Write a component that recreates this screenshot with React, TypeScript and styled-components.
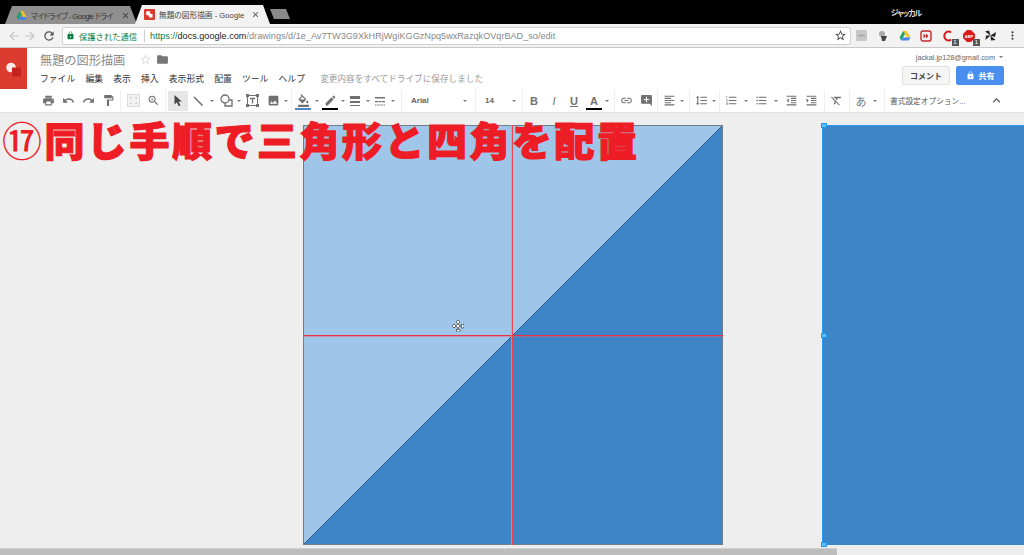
import React from 'react'
import styled, { createGlobalStyle } from 'styled-components'
import {
  MdArrowBack, MdArrowForward, MdRefresh, MdLock, MdStarBorder, MdFolder, MdMoreVert,
  MdPrint, MdUndo, MdRedo, MdFormatPaint, MdZoomIn, MdImage,
  MdFormatColorFill, MdEdit, MdLink, MdAddComment, MdFormatAlignLeft, MdFormatLineSpacing,
  MdFormatListNumbered, MdFormatListBulleted, MdFormatIndentDecrease, MdFormatIndentIncrease,
  MdFormatClear, MdExpandLess, MdClose,
} from 'react-icons/md'

const GlobalStyle = createGlobalStyle`
  html, body {
    margin: 0;
    width: 1024px;
    height: 555px;
    overflow: hidden;
    background: #eee;
    font-family: "Liberation Sans", "Noto Sans CJK JP", sans-serif;
  }
`

const Page = styled.div`
  width: 1024px;
  height: 555px;
  display: flex;
  flex-direction: column;
  overflow: hidden;
`

const TabStrip = styled.div`
  height: 24px;
  flex: none;
  background: #000;
  display: flex;
  align-items: flex-end;
  padding-left: 5px;
`
const Tab = styled.div<{ $active?: boolean }>`
  width: ${(p) => (p.$active ? 135 : 132)}px;
  margin-left: ${(p) => (p.$active ? -2 : 0)}px;
  height: ${(p) => (p.$active ? 19 : 18)}px;
  background: ${(p) => (p.$active ? '#f2f2f2' : '#8f8f8f')};
  clip-path: polygon(0 100%, 7px 0, calc(100% - 7px) 0, 100% 100%);
  display: flex;
  align-items: center;
  padding: 0 ${(p) => (p.$active ? 10 : 7)}px 0 ${(p) => (p.$active ? 9 : 11)}px;
  box-sizing: border-box;
  color: ${(p) => (p.$active ? '#444' : '#333')};
  font-size: 7.7px;
  font-feature-settings: "palt";
  white-space: nowrap;
  position: relative;
  z-index: ${(p) => (p.$active ? 2 : 1)};
  svg {
    flex: none;
  }
`
const TabTitle = styled.span<{ $tight?: boolean }>`
  flex: 1;
  margin-left: 4px;
  letter-spacing: ${(p) => (p.$tight ? -0.6 : 0)}px;
`
const NewTab = styled.div`
  width: 20px;
  height: 10px;
  margin: 0 0 5px 0;
  background: #8a8a8a;
  clip-path: polygon(0 0, 80% 0, 100% 100%, 20% 100%);
`
const WindowTitle = styled.div`
  margin-left: auto;
  margin-right: 103px;
  align-self: center;
  color: #ddd;
  font-size: 8px;
  font-weight: bold;
  font-feature-settings: "palt";
  letter-spacing: -1.2px;
`

const AddressBar = styled.div`
  height: 24px;
  flex: none;
  background: #f2f2f2;
  border-bottom: 1px solid #c8c8c8;
  box-sizing: border-box;
  display: flex;
  align-items: center;
  padding-left: 6px;
`
const NavButton = styled.div<{ $faded?: boolean }>`
  width: 16px;
  margin: 0 ${(p) => (p.$faded ? 0 : 4)}px 0 ${(p) => (p.$faded ? 0 : 3)}px;
  display: flex;
  justify-content: center;
  color: ${(p) => (p.$faded ? '#c4c4c4' : '#555')};
  font-size: 14px;
`
const Omnibox = styled.div`
  width: 789px;
  height: 18px;
  margin-left: 1px;
  background: #fff;
  border: 1px solid #d0d0d0;
  border-radius: 2px;
  box-sizing: border-box;
  display: flex;
  align-items: center;
  padding: 0 3px 0 3px;
  font-size: 9.15px;
  white-space: nowrap;
`
const SecureLabel = styled.span`
  color: #0b8043;
  font-size: 8.3px;
  margin-left: 4px;
`
const UrlDivider = styled.span`
  width: 1px;
  height: 12px;
  background: #ccc;
  margin: 0 5px 0 7px;
`
const UrlPart = styled.span<{ $color: string }>`
  color: ${(p) => p.$color};
`
const OmniStar = styled.span`
  margin-left: auto;
  display: flex;
  color: #444;
  font-size: 13px;
`
const Extensions = styled.div`
  flex: 1;
  display: flex;
  align-items: center;
`
const ExtSlot = styled.div`
  width: 21.5px;
  height: 16px;
  display: flex;
  align-items: center;
  justify-content: center;
  position: relative;
  color: #444;
`
const ExtBadge = styled.span`
  position: absolute;
  right: 0;
  bottom: -2px;
  width: 7px;
  height: 7px;
  background: #555;
  color: #fff;
  font-size: 6px;
  line-height: 7px;
  text-align: center;
`

const AppHeader = styled.div`
  height: 41px;
  flex: none;
  background: #fff;
  display: flex;
`
const LogoBox = styled.div`
  width: 27px;
  background: #dc3c30;
  display: flex;
  align-items: center;
  justify-content: center;
`
const TitleColumn = styled.div`
  margin-left: 13px;
  flex: 1;
  display: flex;
  flex-direction: column;
`
const TitleRow = styled.div`
  height: 23px;
  display: flex;
  align-items: center;
  color: #8a8a8a;
  font-size: 12.2px;
`
const TitleStar = styled.span`
  display: flex;
  margin-left: 14px;
  color: #ddd;
  font-size: 13px;
`
const TitleFolder = styled.span`
  display: flex;
  margin-left: 4px;
  color: #777;
  font-size: 13px;
`
const MenuRow = styled.div`
  display: flex;
  align-items: center;
  height: 14px;
  gap: 10.2px;
  font-size: 8.8px;
  color: #333;
`
const SavedNote = styled.span`
  margin-left: 5px;
  color: #999;
  font-size: 8.65px;
`
const AccountColumn = styled.div`
  width: 122px;
  padding-right: 20px;
  display: flex;
  flex-direction: column;
  align-items: flex-end;
`
const Email = styled.div`
  height: 18px;
  display: flex;
  align-items: center;
  color: #666;
  font-size: 7.3px;
  white-space: nowrap;
  margin-right: -3px;
`
const SmallCaret = styled.span<{ $w?: number }>`
  flex: none;
  width: ${(p) => p.$w ?? 6}px;
  display: flex;
  justify-content: center;
  &::after {
    content: '';
    border-left: 2px solid transparent;
    border-right: 2px solid transparent;
    border-top: 2px solid #777;
  }
`
const HeaderButtons = styled.div`
  display: flex;
  gap: 6px;
`
const CommentButton = styled.div`
  width: 48px;
  height: 19px;
  background: #f5f5f5;
  border: 1px solid #e0e0e0;
  border-radius: 2px;
  box-sizing: border-box;
  display: flex;
  align-items: center;
  justify-content: center;
  color: #444;
  font-size: 8px;
  font-weight: bold;
`
const ShareButton = styled(CommentButton)`
  background: #4a8ff0;
  border-color: #4a8ff0;
  color: #fff;
  gap: 4px;
`

const Toolbar = styled.div`
  height: 24px;
  flex: none;
  background: #fff;
  border-bottom: 1px solid #e2e2e2;
  box-sizing: border-box;
  display: flex;
  align-items: center;
  padding-left: 38px;
  color: #707070;
`
const ToolGroup = styled.div<{ $w: number; $pad?: number }>`
  width: ${(p) => p.$w}px;
  height: 22px;
  flex: none;
  box-sizing: border-box;
  padding-left: ${(p) => p.$pad ?? 0}px;
  border-right: 1px solid #efefef;
  display: flex;
  align-items: center;
  white-space: nowrap;
`
const ToolButton = styled.div<{ $w?: number; $active?: boolean }>`
  flex: none;
  width: ${(p) => p.$w ?? 20}px;
  height: 20px;
  display: flex;
  align-items: center;
  justify-content: center;
  position: relative;
  font-size: 13px;
  background: ${(p) => (p.$active ? '#e6e6e6' : 'transparent')};
`
const ColorBar = styled.span<{ $color: string }>`
  position: absolute;
  left: 2px;
  right: 2px;
  bottom: 1px;
  height: 2px;
  background: ${(p) => p.$color};
`
const FontName = styled.span`
  font-size: 8px;
  font-weight: bold;
  color: #666;
  margin-right: 33px;
`
const FontSize = styled.span`
  font-size: 8px;
  font-weight: bold;
  color: #666;
  margin-right: 17px;
`
const GlyphLabel = styled.span<{ $italic?: boolean; $underline?: boolean }>`
  font-size: 11px;
  font-weight: ${(p) => (p.$italic ? 'normal' : 'bold')};
  font-style: ${(p) => (p.$italic ? 'italic' : 'normal')};
  text-decoration: ${(p) => (p.$underline ? 'underline' : 'none')};
`
const KanaLabel = styled.span`
  font-size: 11px;
  color: #777;
`
const OptionsLabel = styled.span`
  font-size: 7.7px;
  color: #555;
  margin-left: 5px;
`
const Collapse = styled.span`
  display: flex;
  margin-left: 23px;
  font-size: 15px;
  color: #555;
`

const Canvas = styled.div`
  flex: 1;
  min-height: 0;
  background: #eee;
  position: relative;
`
const Stage = styled.div`
  display: flex;
  gap: 99px;
  padding: 12px 0 0 303px;
  width: 1300px;
`
const DrawingSvg = styled.svg`
  flex: none;
  display: block;
`
const SelectedRect = styled.div`
  position: relative;
  width: 420px;
  height: 420px;
  flex: none;
  background: #3d85c6;
  border-left: 1px solid #2b9af0;
  border-top: 1px solid #2b9af0;
  box-sizing: border-box;
`
const Handle = styled.span<{ $top: number }>`
  position: absolute;
  left: -2px;
  top: ${(p) => p.$top}px;
  width: 6px;
  height: 5px;
  box-sizing: border-box;
  background: #5cc0f5;
  border: 1px solid #1e96f0;
`
const Caption = styled.div`
  position: absolute;
  left: 2px;
  top: 1px;
  color: #ee1c25;
  font-family: "Noto Sans CJK JP", sans-serif;
  font-size: 40px;
  font-weight: 900;
  line-height: 50px;
  letter-spacing: 2.5px;
  -webkit-text-stroke: 1.2px #ee1c25;
  white-space: nowrap;
`
const CircledNumber = styled.span`
  font-weight: 500;
  -webkit-text-stroke: 0;
`
const Scrollbar = styled.div`
  position: absolute;
  left: 0;
  bottom: 0;
  width: 837px;
  height: 6px;
  background: #bdbdbd;
  border-top: 1px solid #d0d0d0;
`

const DriveIcon = ({ size }: { size: number }) => (
  <svg width={size} height={size} viewBox="0 0 24 24">
    <path d="M8.5 2h7L23 15h-7z" fill="#f7c325" />
    <path d="M8.5 2 1 15l3.5 6L12 8z" fill="#1fa463" />
    <path d="M4.5 21h15l3.5-6H8z" fill="#4385f4" />
  </svg>
)

const DrawingsIcon = () => (
  <svg width="11" height="11" viewBox="0 0 11 11">
    <rect width="11" height="11" rx="1" fill="#dc3c30" />
    <circle cx="4.2" cy="4.2" r="2.2" fill="#fff" />
    <rect x="5" y="5" width="3.5" height="3.5" fill="#fff" />
  </svg>
)

const LogoMark = () => (
  <svg width="16" height="16" viewBox="0 0 16 16">
    <circle cx="5" cy="6.5" r="4.8" fill="#fde8e6" />
    <rect x="6" y="6.5" width="9" height="9" fill="#c5221f" />
  </svg>
)

const FitIcon = () => (
  <svg width="13" height="13" viewBox="0 0 13 13">
    <rect x="0.5" y="0.5" width="12" height="12" fill="#f2f2f2" stroke="#dcdcdc" />
    <path d="M3 3h2v1H4v1H3zM10 3v2H9V4H8V3zM3 10V8h1v1h1v1zM10 10H8V9h1V8h1z" fill="#cfcfcf" />
  </svg>
)

const ArrowIcon = () => (
  <svg width="12" height="13" viewBox="0 0 12 13">
    <path d="M2.5 1v9.5l2.4-2.2 1.8 3.9 1.7-.8-1.8-3.8h3.2z" fill="#444" />
  </svg>
)

const TextBoxIcon = () => (
  <svg width="13" height="13" viewBox="0 0 13 13" fill="none" stroke="currentColor">
    <rect x="1.5" y="1.5" width="10" height="10" />
    <path d="M4 4.5h5M6.5 4.5v5" strokeWidth="1.3" />
    <path d="M0 0h3v3H0zM10 0h3v3h-3zM0 10h3v3H0zM10 10h3v3h-3z" fill="currentColor" stroke="none" />
  </svg>
)

const ShapeIcon = () => (
  <svg width="13" height="13" viewBox="0 0 13 13" fill="none" stroke="currentColor" strokeWidth="1.3">
    <circle cx="5" cy="5" r="4" />
    <path d="M9 6h3v6H5V9" />
  </svg>
)

const LineIcon = () => (
  <svg width="12" height="12" viewBox="0 0 12 12" stroke="currentColor" strokeWidth="1.6">
    <path d="M2 2l8.5 8.5" />
  </svg>
)

const WeightIcon = () => (
  <svg width="12" height="12" viewBox="0 0 12 12" fill="currentColor">
    <rect x="1" y="1" width="10" height="3" />
    <rect x="1" y="6" width="10" height="2" />
    <rect x="1" y="10" width="10" height="1" />
  </svg>
)

const DashIcon = () => (
  <svg width="12" height="12" viewBox="0 0 12 12" fill="currentColor">
    <rect x="1" y="2" width="10" height="1.5" />
    <path d="M1 6h3v1.2H1zM4.5 6h3v1.2h-3zM8 6h3v1.2H8z" />
    <path d="M1 9.5h1.5v1H1zM3.2 9.5h1.5v1H3.2zM5.4 9.5h1.5v1H5.4zM7.6 9.5h1.5v1H7.6zM9.8 9.5h1.2v1H9.8z" />
  </svg>
)

const PinwheelIcon = () => (
  <svg width="13" height="13" viewBox="0 0 13 13">
    <path d="M6.5 6.5 1 2.5l4-1zM6.5 6.5 12 3l-1 5zM6.5 6.5 11.5 11 7 11.5zM6.5 6.5 1.5 11l.5-4.5z" fill="#222" />
  </svg>
)

const MoveCursor = () => (
  <g transform="translate(155 201)" fill="#fff" stroke="#555" strokeWidth="0.8">
    <path d="M0 -6l2 2.5h-1.2v2.7h2.7v-1.2l2.5 2-2.5 2v-1.2h-2.7v2.7h1.2l-2 2.5-2-2.5h1.2v-2.7h-2.7v1.2l-2.5-2 2.5-2v1.2h2.7v-2.7h-1.2z" />
  </g>
)

const Drawing = () => (
  <DrawingSvg width="420" height="420" viewBox="0 0 420 420" shapeRendering="crispEdges">
    <rect width="420" height="420" fill="#9fc5e8" />
    <path d="M420 0V420H0z" fill="#3d85c6" />
    <path d="M0 420 420 0" stroke="#2f5f8a" strokeWidth="1" shapeRendering="auto" />
    <rect x="0.5" y="0.5" width="419" height="419" fill="none" stroke="#6f7f8c" strokeWidth="1" />
    <path d="M0 211.5H420" stroke="#ee5a68" strokeOpacity="0.45" strokeWidth="1" />
    <path d="M0 210.5H420" stroke="#ee3040" strokeWidth="1" />
    <path d="M208.5 0V420" stroke="#f08a94" strokeOpacity="0.7" strokeWidth="1" />
    <path d="M209.5 0V420" stroke="#ee4450" strokeWidth="1" />
    <MoveCursor />
  </DrawingSvg>
)

const App: React.FC = () => {
  return (
    <Page>
      <GlobalStyle />
      <TabStrip>
        <Tab>
          <DriveIcon size={11} />
          <TabTitle $tight>マイドライブ - Google ドライ</TabTitle>
          <MdClose size={9} />
        </Tab>
        <Tab $active>
          <DrawingsIcon />
          <TabTitle>無題の図形描画 - Google</TabTitle>
          <MdClose size={9} />
        </Tab>
        <NewTab />
        <WindowTitle>ジャッカル</WindowTitle>
      </TabStrip>

      <AddressBar>
        <NavButton $faded><MdArrowBack /></NavButton>
        <NavButton $faded><MdArrowForward /></NavButton>
        <NavButton><MdRefresh /></NavButton>
        <Omnibox>
          <MdLock size={9} color="#0b8043" />
          <SecureLabel>保護された通信</SecureLabel>
          <UrlDivider />
          <UrlPart $color="#0b8043">https://</UrlPart>
          <UrlPart $color="#222">docs.google.com</UrlPart>
          <UrlPart $color="#888">/drawings/d/1e_Av7TW3G9XkHRjWgiKGGzNpq5wxRazqkOVqrBAD_so/edit</UrlPart>
          <OmniStar><MdStarBorder /></OmniStar>
        </Omnibox>
        <Extensions>
          <ExtSlot>
            <svg width="11" height="11" viewBox="0 0 11 11"><rect width="11" height="11" fill="#c8c8c8" /><rect x="2" y="4.5" width="7" height="2" fill="#aaa" /></svg>
          </ExtSlot>
          <ExtSlot>
            <svg width="12" height="12" viewBox="0 0 12 12"><circle cx="5" cy="4" r="3" fill="#aaa" /><path d="M4 6h6l-2 5H5z" fill="#444" /></svg>
          </ExtSlot>
          <ExtSlot><DriveIcon size={12} /></ExtSlot>
          <ExtSlot>
            <svg width="12" height="12" viewBox="0 0 12 12">
              <rect x="1" y="1" width="10" height="10" rx="2" fill="none" stroke="#c62828" strokeWidth="1.4" />
              <path d="M3.5 3.5 6 6 3.5 8.5zM6 3.5 8.5 6 6 8.5z" fill="#c62828" />
            </svg>
          </ExtSlot>
          <ExtSlot>
            <svg width="12" height="12" viewBox="0 0 12 12"><path d="M9 9.5A4 4.5 0 1 1 9 2.5" fill="none" stroke="#d81b1b" strokeWidth="2" /></svg>
            <ExtBadge>1</ExtBadge>
          </ExtSlot>
          <ExtSlot>
            <svg width="12" height="12" viewBox="0 0 12 12">
              <path d="M4 0h4l4 4v4l-4 4H4L0 8V4z" fill="#d81b1b" />
              <text x="6" y="7.5" fontSize="4" fontWeight="bold" textAnchor="middle" fill="#fff">ABP</text>
            </svg>
            <ExtBadge>1</ExtBadge>
          </ExtSlot>
          <ExtSlot><PinwheelIcon /></ExtSlot>
          <ExtSlot><MdMoreVert size={13} /></ExtSlot>
        </Extensions>
      </AddressBar>

      <AppHeader>
        <LogoBox><LogoMark /></LogoBox>
        <TitleColumn>
          <TitleRow>
            無題の図形描画
            <TitleStar><MdStarBorder /></TitleStar>
            <TitleFolder><MdFolder /></TitleFolder>
          </TitleRow>
          <MenuRow>
            <span>ファイル</span>
            <span>編集</span>
            <span>表示</span>
            <span>挿入</span>
            <span>表示形式</span>
            <span>配置</span>
            <span>ツール</span>
            <span>ヘルプ</span>
            <SavedNote>変更内容をすべてドライブに保存しました</SavedNote>
          </MenuRow>
        </TitleColumn>
        <AccountColumn>
          <Email>jackal.jp128@gmail.com<SmallCaret $w={12} /></Email>
          <HeaderButtons>
            <CommentButton>コメント</CommentButton>
            <ShareButton><MdLock size={9} />共有</ShareButton>
          </HeaderButtons>
        </AccountColumn>
      </AppHeader>

      <Toolbar>
        <ToolGroup $w={83}>
          <ToolButton><MdPrint /></ToolButton>
          <ToolButton><MdUndo /></ToolButton>
          <ToolButton><MdRedo /></ToolButton>
          <ToolButton><MdFormatPaint /></ToolButton>
        </ToolGroup>
        <ToolGroup $w={45} $pad={2}>
          <ToolButton><FitIcon /></ToolButton>
          <ToolButton><MdZoomIn /></ToolButton>
        </ToolGroup>
        <ToolGroup $w={126} $pad={2}>
          <ToolButton $active><ArrowIcon /></ToolButton>
          <ToolButton><LineIcon /></ToolButton>
          <SmallCaret $w={8} />
          <ToolButton><ShapeIcon /></ToolButton>
          <SmallCaret $w={5} />
          <ToolButton $w={22}><TextBoxIcon /></ToolButton>
          <ToolButton><MdImage /></ToolButton>
          <SmallCaret $w={5} />
        </ToolGroup>
        <ToolGroup $w={110} $pad={1}>
          <ToolButton><MdFormatColorFill /><ColorBar $color="#4a86c8" /></ToolButton>
          <SmallCaret $w={7} />
          <ToolButton><MdEdit /><ColorBar $color="#000" /></ToolButton>
          <SmallCaret $w={5} />
          <ToolButton><WeightIcon /></ToolButton>
          <SmallCaret $w={5} />
          <ToolButton><DashIcon /></ToolButton>
          <SmallCaret $w={5} />
        </ToolGroup>
        <ToolGroup $w={74} $pad={9}>
          <FontName>Arial</FontName>
          <SmallCaret />
        </ToolGroup>
        <ToolGroup $w={47} $pad={9}>
          <FontSize>14</FontSize>
          <SmallCaret />
        </ToolGroup>
        <ToolGroup $w={92} $pad={1}>
          <ToolButton><GlyphLabel>B</GlyphLabel></ToolButton>
          <ToolButton><GlyphLabel $italic>I</GlyphLabel></ToolButton>
          <ToolButton><GlyphLabel $underline>U</GlyphLabel></ToolButton>
          <ToolButton><GlyphLabel>A</GlyphLabel><ColorBar $color="#000" /></ToolButton>
          <SmallCaret />
        </ToolGroup>
        <ToolGroup $w={43} $pad={1}>
          <ToolButton><MdLink /></ToolButton>
          <ToolButton><MdAddComment /></ToolButton>
        </ToolGroup>
        <ToolGroup $w={32} $pad={1}>
          <ToolButton><MdFormatAlignLeft /></ToolButton>
          <SmallCaret />
        </ToolGroup>
        <ToolGroup $w={30} $pad={1}>
          <ToolButton><MdFormatLineSpacing /></ToolButton>
          <SmallCaret />
        </ToolGroup>
        <ToolGroup $w={105} $pad={1}>
          <ToolButton><MdFormatListNumbered /></ToolButton>
          <SmallCaret $w={10} />
          <ToolButton><MdFormatListBulleted /></ToolButton>
          <SmallCaret $w={10} />
          <ToolButton><MdFormatIndentDecrease /></ToolButton>
          <ToolButton><MdFormatIndentIncrease /></ToolButton>
        </ToolGroup>
        <ToolGroup $w={25} $pad={1}>
          <ToolButton><MdFormatClear /></ToolButton>
        </ToolGroup>
        <ToolGroup $w={35} $pad={1}>
          <ToolButton><KanaLabel>あ</KanaLabel></ToolButton>
          <SmallCaret $w={8} />
        </ToolGroup>
        <OptionsLabel>書式設定オプション...</OptionsLabel>
        <Collapse><MdExpandLess /></Collapse>
      </Toolbar>

      <Canvas>
        <Stage>
          <Drawing />
          <SelectedRect>
            <Handle $top={-3} />
            <Handle $top={207} />
            <Handle $top={416} />
          </SelectedRect>
        </Stage>
        <Caption><CircledNumber>⑰</CircledNumber>同じ手順で三角形と四角を配置</Caption>
        <Scrollbar />
      </Canvas>
    </Page>
  )
}

export default App
